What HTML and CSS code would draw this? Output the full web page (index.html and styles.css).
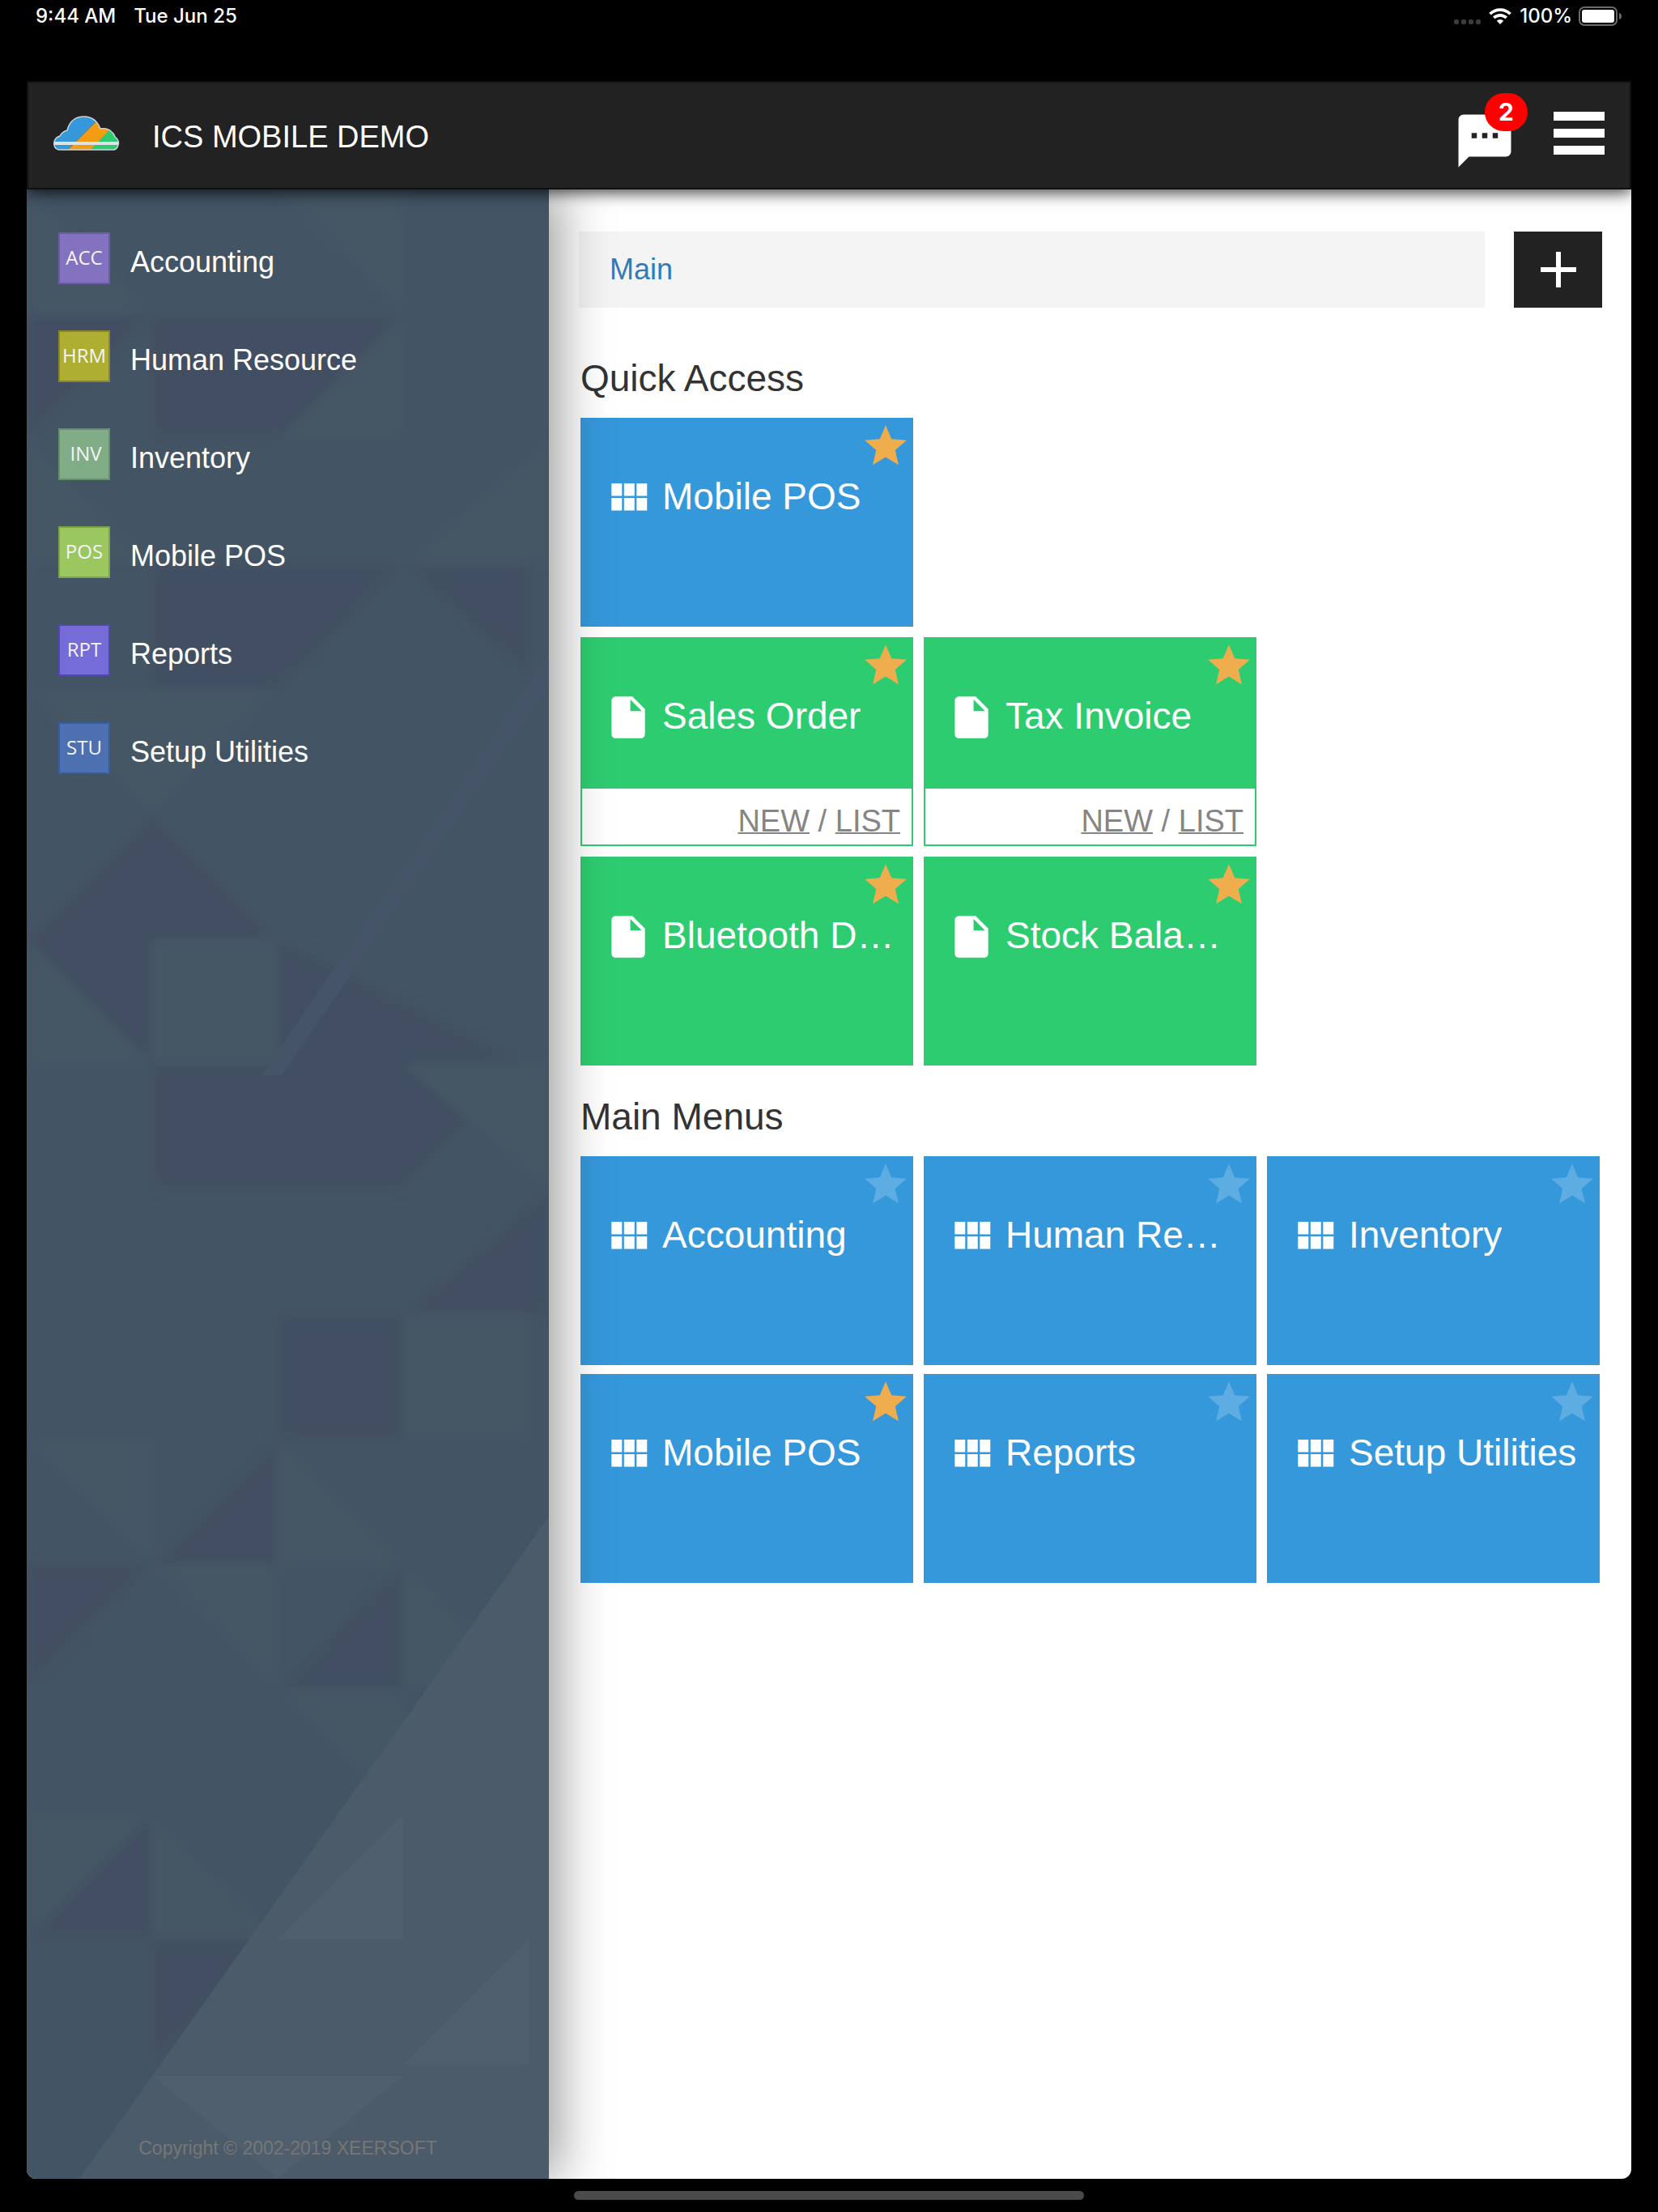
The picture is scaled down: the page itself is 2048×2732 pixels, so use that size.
FILE: index.html
```html
<!DOCTYPE html>
<html lang="en">
<head>
<meta charset="utf-8">
<meta name="viewport" content="width=device-width, initial-scale=1">
<title>ICS Mobile Demo</title>
<link rel="stylesheet" href="styles.css">
</head>
<body>
<svg class="sprite" aria-hidden="true">
  <symbol id="i-grid" viewBox="0 0 24 24"><path d="M4 11h5V5H4v6zm0 7h5v-6H4v6zm6 0h5v-6h-5v6zm6 0h5v-6h-5v6zm-6-7h5V5h-5v6zm6-6v6h5V5h-5z"/></symbol>
  <symbol id="i-file" viewBox="0 0 24 24"><path d="M6 2c-1.1 0-1.99.9-1.99 2L4 20c0 1.1.89 2 1.99 2H18c1.1 0 2-.9 2-2V8l-6-6H6zm7 7V3.500L18.500 9H13z"/></symbol>
  <symbol id="i-star" viewBox="0 0 24 24"><path d="M12 17.27L18.18 21l-1.640-7.030L22 9.240l-7.190-.61L12 2 9.190 8.630 2 9.240l5.460 4.730L5.820 21z"/></symbol>
</svg>

<div class="status">
  <span>9:44 AM</span>
  <span class="status-date">Tue Jun 25</span>
  <div class="status-right">
    <svg class="signal" viewBox="0 0 34 8"><g fill="#3c3c3c"><rect x="0" y="1" width="6" height="6" rx="2"/><rect x="9" y="1" width="6" height="6" rx="2"/><rect x="18" y="1" width="6" height="6" rx="2"/><rect x="27" y="1" width="6" height="6" rx="2"/></g></svg>
    <svg class="wifi" viewBox="0 0 28 20"><g fill="none" stroke="#fff" stroke-width="3.600"><path d="M1.500 7.300a17.700 17.700 0 0 1 25 0"/><path d="M6.300 12a11 11 0 0 1 15.400 0"/></g><path fill="#fff" d="M9.800 15.700a6 6 0 0 1 8.400 0L14 20z"/></svg>
    <span>100%</span>
    <svg class="battery" viewBox="0 0 54 24"><rect x="1" y="1" width="46" height="22" rx="6" fill="none" stroke="#6b6b6b" stroke-width="2"/><rect x="4" y="4" width="40" height="16" rx="3" fill="#fff"/><path d="M50 8c4 1 4 7 0 8z" fill="#6b6b6b"/></svg>
  </div>
</div>

<div class="app">
  <header class="topbar">
    <svg class="logo" viewBox="0 0 82 44">
      <clipPath id="cloud"><path d="M8 42C2 42 0 37 1 32c1-4 3-6 7-7 2-4 5-6 9-7C20 6 28 1 38 1c9 0 16 5 20 15 6-1 10 0 13 3 3 2 4 4 5 7 4 3 5 7 4 10-1 4-3 6-6 6z"/></clipPath>
      <g clip-path="url(#cloud)">
        <path fill="#3598db" d="M0 0h60L18 42H0z"/>
        <path fill="#f49c14" d="M60 0 18 42h29l39-42z"/>
        <path fill="#2ecc71" d="M82 4 46 42h36z"/>
        <path fill="#dfe3e5" d="M0 32h82v4H0z"/>
      </g>
      <path fill="none" stroke="#c9d3da" stroke-width="1.500" d="M8 42C2 42 0 37 1 32c1-4 3-6 7-7 2-4 5-6 9-7C20 6 28 1 38 1c9 0 16 5 20 15 6-1 10 0 13 3 3 2 4 4 5 7 4 3 5 7 4 10-1 4-3 6-6 6z"/>
    </svg>
    <h1 class="title">ICS MOBILE DEMO</h1>
    <button class="chat" aria-label="Messages">
      <svg viewBox="0 0 24 24"><path fill="#fff" d="M20 2H4c-1.100 0-1.990.9-1.990 2L2 22l4-4h14c1.100 0 2-.9 2-2V4c0-1.100-.9-2-2-2zM9 11H7V9h2v2zm4 0h-2V9h2v2zm4 0h-2V9h2v2z"/></svg>
      <span class="badge">2</span>
    </button>
    <button class="burger" aria-label="Menu"><span></span><span></span><span></span></button>
  </header>

  <div class="body">
    <nav class="side">
      <svg class="side-art" viewBox="0 0 645 2457" preserveAspectRatio="none" aria-hidden="true">
        <filter id="soft"><feGaussianBlur stdDeviation="7"/></filter>
        <g filter="url(#soft)">
          <g fill="#435062">
            <path d="M0 154H155L0 309z"/>
            <path d="M155 154H465L310 309H155z"/>
            <path d="M155 463H620V600L465 463 310 617H155z"/>
            <path d="M0 926 155 771 310 926 155 1080z"/>
            <path d="M155 1080H620L465 1235H155z"/>
            <path d="M310 926 620 1080H310z"/>
            <path d="M465 1389 645 1235V1389z"/>
            <path d="M310 1389H465V1543H310z"/>
            <path d="M155 1698 310 1543V1698z"/>
            <path d="M0 1698H155L0 1852z"/>
            <path d="M310 1852 465 1698V1852z"/>
            <path d="M0 2161 155 2007V2161z"/>
            <path d="M155 2161H310L155 2316z"/>
          </g>
          <g fill="#455765">
            <path d="M0 0 155 154H0z"/>
            <path d="M310 0H465V154z"/>
            <path d="M465 154V309H310z"/>
            <path d="M465 463 645 309V463z"/>
            <path d="M0 309 155 463H0z"/>
            <path d="M0 617H310L155 771z"/>
            <path d="M155 926H310V1080H155z"/>
            <path d="M0 926 155 1080H0z"/>
            <path d="M465 1080H645V1235z"/>
            <path d="M465 1389H620V1543H465z"/>
            <path d="M0 1543H155V1698z"/>
            <path d="M310 1543 465 1698H310z"/>
            <path d="M155 1698H310V1852z"/>
            <path d="M465 1698 620 1852H465z"/>
            <path d="M310 1852H465V2007z"/>
            <path d="M0 2007H155L0 2161z"/>
            <path d="M155 2007 310 2161H155z"/>
          </g>
        </g>
        <path fill="#465467" d="M290 1094 645 572v42L315 1094z"/>
        <path fill="#4c5b6a" d="M645 1639V2457H65z"/>
        <g fill="#4f5f6d"><path d="M155 2330H465L310 2457z"/><path d="M310 2161H465V2007z"/><path d="M465 2316 620 2161V2316z"/></g>
      </svg>
      <ul class="menu">
        <li><a href="#acc"><span class="chip acc">ACC</span>Accounting</a></li>
        <li><a href="#hrm"><span class="chip hrm">HRM</span>Human Resource</a></li>
        <li><a href="#inv"><span class="chip inv">INV</span>Inventory</a></li>
        <li><a href="#pos"><span class="chip pos">POS</span>Mobile POS</a></li>
        <li><a href="#rpt"><span class="chip rpt">RPT</span>Reports</a></li>
        <li><a href="#stu"><span class="chip stu">STU</span>Setup Utilities</a></li>
      </ul>
      <p class="copy">Copyright © 2002-2019 XEERSOFT</p>
    </nav>

    <main class="main">
      <div class="crumbs">
        <div class="crumb"><a href="#main">Main</a></div>
        <button class="add" aria-label="Add"><svg viewBox="0 0 44 44"><path fill="#fff" d="M19 0h6v19h19v6H25v19h-6V25H0v-6h19z"/></svg></button>
      </div>

      <h2>Quick Access</h2>
      <div class="tiles quick">
        <article class="tile blue solo"><a class="face" href="#q1"><svg><use href="#i-grid"/></svg><span>Mobile POS</span></a><button class="star on" aria-label="Remove from quick access"><svg><use href="#i-star"/></svg></button></article>
        <article class="tile green"><a class="face" href="#q2"><svg><use href="#i-file"/></svg><span>Sales Order</span></a><button class="star on" aria-label="Remove from quick access"><svg><use href="#i-star"/></svg></button><div class="links"><a href="#new">NEW</a> / <a href="#list">LIST</a></div></article>
        <article class="tile green"><a class="face" href="#q3"><svg><use href="#i-file"/></svg><span>Tax Invoice</span></a><button class="star on" aria-label="Remove from quick access"><svg><use href="#i-star"/></svg></button><div class="links"><a href="#new">NEW</a> / <a href="#list">LIST</a></div></article>
        <article class="tile green first"><a class="face" href="#q4"><svg><use href="#i-file"/></svg><span>Bluetooth D…</span></a><button class="star on" aria-label="Remove from quick access"><svg><use href="#i-star"/></svg></button></article>
        <article class="tile green"><a class="face" href="#q5"><svg><use href="#i-file"/></svg><span>Stock Bala…</span></a><button class="star on" aria-label="Remove from quick access"><svg><use href="#i-star"/></svg></button></article>
      </div>

      <h2>Main Menus</h2>
      <div class="tiles">
        <article class="tile blue"><a class="face" href="#m1"><svg><use href="#i-grid"/></svg><span>Accounting</span></a><button class="star" aria-label="Add to quick access"><svg><use href="#i-star"/></svg></button></article>
        <article class="tile blue"><a class="face" href="#m2"><svg><use href="#i-grid"/></svg><span>Human Re…</span></a><button class="star" aria-label="Add to quick access"><svg><use href="#i-star"/></svg></button></article>
        <article class="tile blue"><a class="face" href="#m3"><svg><use href="#i-grid"/></svg><span>Inventory</span></a><button class="star" aria-label="Add to quick access"><svg><use href="#i-star"/></svg></button></article>
        <article class="tile blue"><a class="face" href="#m4"><svg><use href="#i-grid"/></svg><span>Mobile POS</span></a><button class="star on" aria-label="Remove from quick access"><svg><use href="#i-star"/></svg></button></article>
        <article class="tile blue"><a class="face" href="#m5"><svg><use href="#i-grid"/></svg><span>Reports</span></a><button class="star" aria-label="Add to quick access"><svg><use href="#i-star"/></svg></button></article>
        <article class="tile blue"><a class="face" href="#m6"><svg><use href="#i-grid"/></svg><span>Setup Utilities</span></a><button class="star" aria-label="Add to quick access"><svg><use href="#i-star"/></svg></button></article>
      </div>
    </main>
  </div>
</div>
<div class="home"></div>
</body>
</html>
```
FILE: styles.css
```css
* { box-sizing: border-box; margin: 0; padding: 0; }
body {
  min-height: 100vh;
  display: flex;
  flex-direction: column;
  background: #000;
  font-family: "Liberation Sans", Arial, sans-serif;
  font-size: 36px;
}
button { border: 0; background: none; font: inherit; cursor: pointer; }
a { color: inherit; text-decoration: none; }
ul { list-style: none; }
svg { display: block; }
.sprite { position: absolute; width: 0; height: 0; }

/* Device status bar */
.status {
  display: flex;
  align-items: center;
  height: 40px;
  margin-bottom: 60px;
  padding: 0 44px;
  color: #fff;
  font: 500 24px/40px Inter, sans-serif;
}
.status-date { margin-left: 22px; }
.status-right { display: flex; align-items: center; margin-left: auto; }
.signal { width: 34px; height: 8px; margin: 14px 9px 0 0; }
.wifi { width: 28px; height: 20px; margin-right: 10px; }
.battery { width: 54px; height: 24px; margin-left: 8px; }

.app {
  flex: 1;
  display: flex;
  flex-direction: column;
  margin: 0 33px;
  border-radius: 0 0 12px 12px;
  overflow: hidden;
  background: #fff;
}

/* Header */
.topbar {
  position: relative;
  z-index: 3;
  display: flex;
  align-items: center;
  height: 134px;
  padding: 0 31px;
  border: 2px solid #101010;
  background: #222;
  box-shadow: 0 4px 18px rgba(0, 0, 0, .75);
}
.logo { width: 82px; height: 44px; margin: 0 40px 4px 0; }
.title { padding-top: 4px; color: #fff; font-size: 38px; font-weight: 400; line-height: 44px; }
.chat { position: relative; width: 78px; margin-left: auto; margin-right: 46px; padding-top: 14px; }
.badge {
  position: absolute;
  top: -6px;
  right: -14px;
  width: 53px;
  border-radius: 24px;
  background: #f00;
  color: #fff;
  font: 700 30px/47px Inter, sans-serif;
}
.burger { display: flex; flex-direction: column; gap: 10px; width: 63px; padding-bottom: 5px; }
.burger span { height: 11px; background: #fff; }

.body { flex: 1; display: grid; grid-template-columns: 645px 1fr; }

/* Sidebar */
.side {
  position: relative;
  z-index: 2;
  display: flex;
  flex-direction: column;
  justify-content: space-between;
  padding: 53px 39px 14px;
  background: #435465;
  box-shadow: 12px 0 60px rgba(0, 0, 0, .4);
}
.side-art { position: absolute; inset: 0; width: 100%; height: 100%; }
.menu { position: relative; }
.menu a { display: flex; gap: 25px; height: 121px; color: #fff; line-height: 74px; }
.chip {
  width: 64px;
  height: 64px;
  border: 2px solid;
  font: 24px/58px "Open Sans", sans-serif;
  text-align: center;
}
.acc { background: #8372c0; border-color: #6c5ca6; }
.hrm { background: #aeae32; border-color: #87872b; }
.inv { background: #80ad86; border-color: #66906d; padding-left: 4px; }
.pos { background: #9bc760; border-color: #7da34a; }
.rpt { background: #766cd8; border-color: #5048b0; }
.stu { background: #4c70b0; border-color: #385c9c; }
.chip { color: #f4f4f8; }
.copy { position: relative; color: #767676; font-size: 23px; line-height: 48px; text-align: center; }

/* Content */
.main { padding: 52px 36px 40px 37px; color: #333; }
.crumbs { display: flex; gap: 36px; }
.crumb { flex: 1; padding: 0 38px; background: #f4f4f4; color: #337ab7; line-height: 94px; }
.add { display: flex; align-items: center; justify-content: center; width: 109px; height: 94px; background: #222; }
.add svg { width: 44px; height: 44px; }
h2 { padding: 60px 2px 22px; font-size: 46px; font-weight: 400; line-height: 54px; }
.tiles { display: grid; grid-template-columns: repeat(3, 1fr); gap: 11px 13px; padding: 0 3px 0 2px; }
.quick { row-gap: 13px; margin-bottom: -24px; }
.solo, .first { grid-column-start: 1; }
.solo + .tile { grid-column-start: 1; }
.tile { position: relative; display: flex; flex-direction: column; min-width: 0; height: 258px; }
.blue { background: #3598db; }
.green { background: #2ecc71; }
.face { display: flex; flex: 1; gap: 11px; padding: 68px 22px 0 28px; color: #fff; font-size: 46px; line-height: 58px; }
.face svg { flex: none; width: 62px; height: 62px; fill: #fff; }
.face span { overflow: hidden; white-space: nowrap; text-overflow: ellipsis; }
.star { position: absolute; top: 4px; right: 3px; }
.star svg { width: 62px; height: 62px; fill: rgba(255, 255, 255, .2); }
.star.on svg { fill: #f0ad4e; }
.links {
  height: 73px;
  padding: 0 14px;
  border: 2px solid #2ecc71;
  background: #fff;
  color: #858585;
  font-size: 38px;
  line-height: 80px;
  text-align: right;
}
.links a { text-decoration: underline; text-decoration-thickness: 2px; }

.home { width: 630px; height: 11px; margin: 15px auto; border-radius: 6px; background: #4a4a4a; }
```
